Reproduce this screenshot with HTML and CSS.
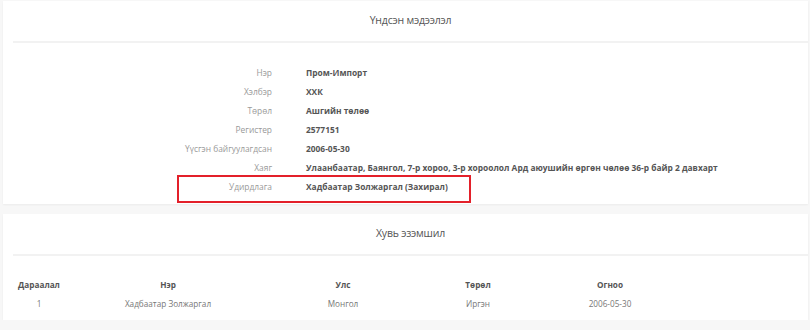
FILE: index.html
```html
<!DOCTYPE html>
<html>
<head>
	<meta charset="utf-8">
	<title>Компанийн мэдээлэл</title>
	<link rel="stylesheet" href="styles.css">
</head>
<body>
	<div class="panel panel-info">
		<div class="panel-heading">Үндсэн мэдээлэл</div>
		<div class="panel-body">
			<div class="field">
				<div class="field-label">Нэр</div>
				<div class="field-value">Пром-Импорт</div>
			</div>
			<div class="field">
				<div class="field-label">Хэлбэр</div>
				<div class="field-value">ХХК</div>
			</div>
			<div class="field">
				<div class="field-label">Төрөл</div>
				<div class="field-value">Ашгийн төлөө</div>
			</div>
			<div class="field">
				<div class="field-label">Регистер</div>
				<div class="field-value">2577151</div>
			</div>
			<div class="field">
				<div class="field-label">Үүсгэн байгуулагдсан</div>
				<div class="field-value">2006-05-30</div>
			</div>
			<div class="field">
				<div class="field-label">Хаяг</div>
				<div class="field-value">Улаанбаатар, Баянгол, 7-р хороо, 3-р хороолол Ард аюушийн өргөн чөлөө 36-р байр 2 давхарт</div>
			</div>
			<div class="field field-marked">
				<div class="field-label">Удирдлага</div>
				<div class="field-value">Хадбаатар Золжаргал (Захирал)</div>
			</div>
		</div>
	</div>

	<div class="panel panel-owners">
		<div class="panel-heading">Хувь эзэмшил</div>
		<table class="owners">
			<thead>
				<tr>
					<th class="col-order">Дараалал</th>
					<th class="col-name">Нэр</th>
					<th class="col-country">Улс</th>
					<th class="col-type">Төрөл</th>
					<th class="col-date">Огноо</th>
					<th></th>
				</tr>
			</thead>
			<tbody>
				<tr>
					<td>1</td>
					<td>Хадбаатар Золжаргал</td>
					<td>Монгол</td>
					<td>Иргэн</td>
					<td>2006-05-30</td>
					<td></td>
				</tr>
			</tbody>
		</table>
	</div>
</body>
</html>
```

FILE: styles.css
```css
/* Base */

body { margin: 0; padding: 1px 2px 0 3px; background: #f7f7f7; font-family: "Open Sans", "DejaVu Sans", sans-serif; color: #555; }

/* Panels */

.panel { background: #fff; box-shadow: 0 1px 2px rgba(0,0,0,.05); }
.panel + .panel { margin-top: 10px; }
.panel-heading { height: 40px; line-height: 38px; margin-left: 10px; text-align: center; font-size: 10.5px; color: #555; border-bottom: 2px solid #f2f2f2; letter-spacing: -.2px; }

.panel-info .panel-body { padding: 20px 0 8px; }

/* Detail rows */

.field { display: flex; height: 19px; line-height: 19px; font-size: 8.4px; }
.field-label { width: 269px; flex: none; text-align: right; color: #999; }
.field-value { margin-left: 34px; font-weight: bold; color: #555; white-space: nowrap; }

.field-marked { position: relative; }
.field-marked::after { content: ""; position: absolute; left: 174px; top: -2px; width: 290px; height: 24px; border: 2px solid #e3202a; }

/* Owners table */

.panel-owners { padding-bottom: 7px; }
.owners { margin: 19px 0 0 10px; border-collapse: collapse; font-size: 8.2px; table-layout: fixed; width: calc(100% - 10px); }
.owners th, .owners td { text-align: center; height: 19px; padding: 0; white-space: nowrap; }
.owners th { font-weight: bold; color: #555; }
.owners td { color: #777; }
.col-order { width: 52px; }
.col-name { width: 206px; }
.col-country { width: 144px; }
.col-type { width: 126px; }
.col-date { width: 138px; }
```
